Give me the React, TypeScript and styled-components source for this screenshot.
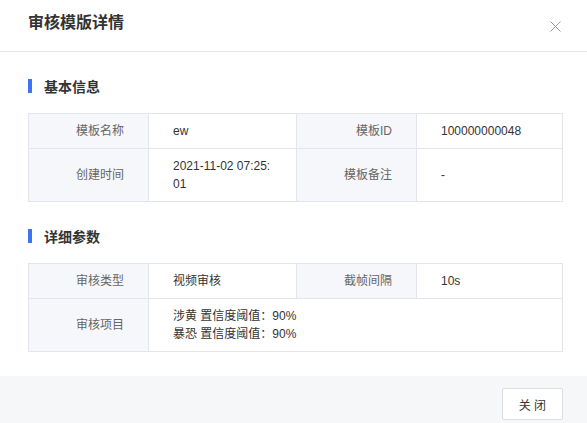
import React from "react";
import styled, { createGlobalStyle } from "styled-components";

const Global = createGlobalStyle`
  html, body { margin: 0; padding: 0; background: #fff; }
  body { font-family: "Liberation Sans", "Noto Sans CJK SC", sans-serif; -webkit-font-smoothing: antialiased; }
  * { box-sizing: border-box; }
`;

const Modal = styled.div`
  min-height: 100vh;
  display: flex;
  flex-direction: column;
  background: #fff;
`;

const Header = styled.div`
  height: 52px;
  display: flex;
  align-items: flex-start;
  justify-content: space-between;
  padding: 11px 26px 0 28px;
  border-bottom: 1px solid #e4e5e9;
`;

const Title = styled.h1`
  margin: 0;
  font-size: 16px;
  line-height: 24px;
  font-weight: 700;
  color: #333;
`;

const CloseBtn = styled.button`
  margin-top: 9px;
  width: 12px;
  height: 12px;
  padding: 0;
  border: none;
  background: transparent;
  display: flex;
  align-items: center;
  justify-content: center;
  cursor: pointer;
`;

const Body = styled.div`
  padding: 24px 24px 24px 28px;
  display: flex;
  flex-direction: column;
  gap: 24px;
`;

const Section = styled.section`
  display: flex;
  flex-direction: column;
  gap: 17px;
`;

const SectionTitle = styled.div`
  height: 20px;
  display: flex;
  align-items: center;
  gap: 12px;
  font-size: 14px;
  font-weight: 700;
  color: #333;
  &::before {
    content: "";
    width: 4px;
    height: 14px;
    background: #3b74f6;
  }
`;

const Table = styled.table`
  width: 100%;
  border-collapse: collapse;
  table-layout: fixed;
  font-size: 12px;
`;

const Col = styled.col<{ $w?: number }>`
  width: ${(p) => (p.$w ? `${p.$w}px` : "auto")};
`;

const LabelCell = styled.td`
  border: 1px solid #e3e5ee;
  background: #f6f7fa;
  color: #666;
  text-align: right;
  padding: 8px 24px 8px 8px;
  line-height: 18px;
  vertical-align: middle;
`;

const ValueCell = styled.td`
  border: 1px solid #e3e5ee;
  background: #fff;
  color: #333;
  text-align: left;
  padding: 8px 24px;
  line-height: 18px;
  vertical-align: middle;
  word-break: break-all;
`;

const Footer = styled.div`
  flex: 1;
  min-height: 56px;
  background: #f6f7f9;
  display: flex;
  justify-content: flex-end;
  align-items: flex-start;
  padding: 12px 24px;
`;

const Button = styled.button`
  height: 32px;
  padding: 0 16px;
  border: 1px solid #dcdee4;
  border-radius: 2px;
  background: #fff;
  color: #333;
  font-family: "Liberation Sans", "Noto Sans CJK SC", sans-serif;
  font-size: 12px;
  cursor: pointer;
`;

const CloseIcon = () => (
  <svg width="11" height="11" viewBox="0 0 11 11">
    <path d="M0.5 0.5 L10.5 10.5 M10.5 0.5 L0.5 10.5" stroke="#999" strokeWidth="1" fill="none" />
  </svg>
);

const Cols = () => (
  <colgroup>
    <Col $w={120} />
    <Col $w={148} />
    <Col $w={120} />
    <Col />
  </colgroup>
);

export default function App() {
  return (
    <Modal>
      <Global />
      <Header>
        <Title>审核模版详情</Title>
        <CloseBtn aria-label="关闭">
          <CloseIcon />
        </CloseBtn>
      </Header>
      <Body>
        <Section>
          <SectionTitle>基本信息</SectionTitle>
          <Table>
            <Cols />
            <tbody>
              <tr>
                <LabelCell>模板名称</LabelCell>
                <ValueCell>ew</ValueCell>
                <LabelCell>模板ID</LabelCell>
                <ValueCell>100000000048</ValueCell>
              </tr>
              <tr>
                <LabelCell>创建时间</LabelCell>
                <ValueCell>2021-11-02 07:25:01</ValueCell>
                <LabelCell>模板备注</LabelCell>
                <ValueCell>-</ValueCell>
              </tr>
            </tbody>
          </Table>
        </Section>
        <Section>
          <SectionTitle>详细参数</SectionTitle>
          <Table>
            <Cols />
            <tbody>
              <tr>
                <LabelCell>审核类型</LabelCell>
                <ValueCell>视频审核</ValueCell>
                <LabelCell>截帧间隔</LabelCell>
                <ValueCell>10s</ValueCell>
              </tr>
              <tr>
                <LabelCell>审核项目</LabelCell>
                <ValueCell colSpan={3}>
                  涉黄 置信度阈值：90%
                  <br />
                  暴恐 置信度阈值：90%
                </ValueCell>
              </tr>
            </tbody>
          </Table>
        </Section>
      </Body>
      <Footer>
        <Button>关 闭</Button>
      </Footer>
    </Modal>
  );
}
